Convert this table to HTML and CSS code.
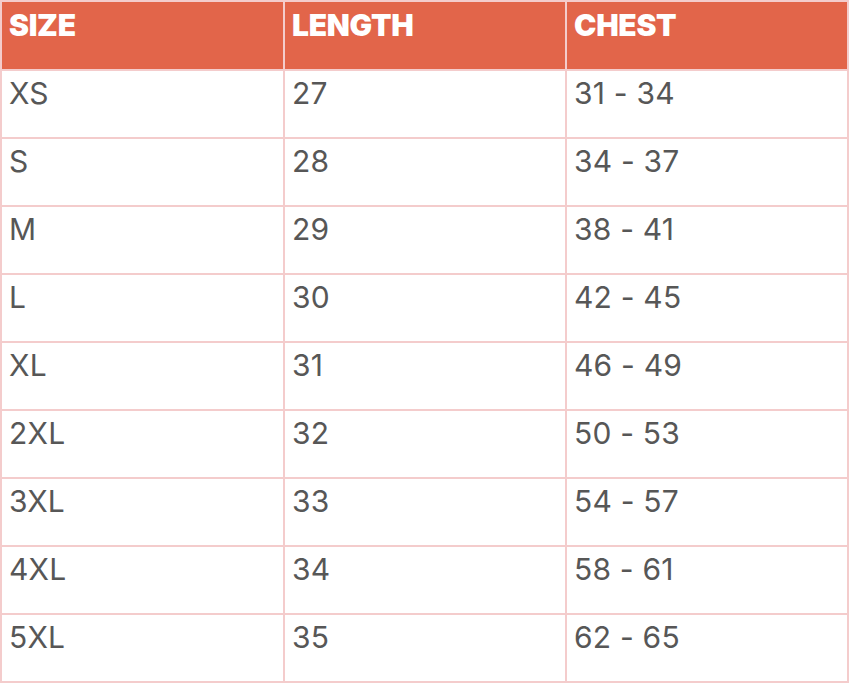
FILE: index.html
```html
<!DOCTYPE html>
<html lang="en">
<head>
<meta charset="utf-8">
<title>Size chart</title>
<link rel="stylesheet" href="styles.css">
</head>
<body>
<div class="chart" role="table">
  <div class="cell head">SIZE</div><div class="cell head">LENGTH</div><div class="cell head">CHEST</div>
  <div class="cell">XS</div><div class="cell">27</div><div class="cell">31 - 34</div>
  <div class="cell">S</div><div class="cell">28</div><div class="cell">34 - 37</div>
  <div class="cell">M</div><div class="cell">29</div><div class="cell">38 - 41</div>
  <div class="cell">L</div><div class="cell">30</div><div class="cell">42 - 45</div>
  <div class="cell">XL</div><div class="cell">31</div><div class="cell">46 - 49</div>
  <div class="cell">2XL</div><div class="cell">32</div><div class="cell">50 - 53</div>
  <div class="cell">3XL</div><div class="cell">33</div><div class="cell">54 - 57</div>
  <div class="cell">4XL</div><div class="cell">34</div><div class="cell">58 - 61</div>
  <div class="cell">5XL</div><div class="cell">35</div><div class="cell">62 - 65</div>
</div>
</body>
</html>
```
FILE: styles.css
```css
html, body {
  margin: 0;
  padding: 0;
  background: #ffffff;
}

.chart {
  display: grid;
  grid-template-columns: 281px 280px 280px;
  grid-template-rows: 67px repeat(9, 66px);
  gap: 2px;
  padding: 2px;
  width: max-content;
  background: #f4cccc;
  font-family: Inter, "Noto Sans", sans-serif;
}

.cell {
  background: #ffffff;
  color: #575757;
  font-size: 30px;
  line-height: 30px;
  padding: 7px 7px 0;
  box-sizing: border-box;
  letter-spacing: 0.2px;
}

.cell.head {
  background: #e2654a;
  color: #ffffff;
  font-weight: 900;
  padding-top: 8px;
  letter-spacing: -0.3px;
}
```
